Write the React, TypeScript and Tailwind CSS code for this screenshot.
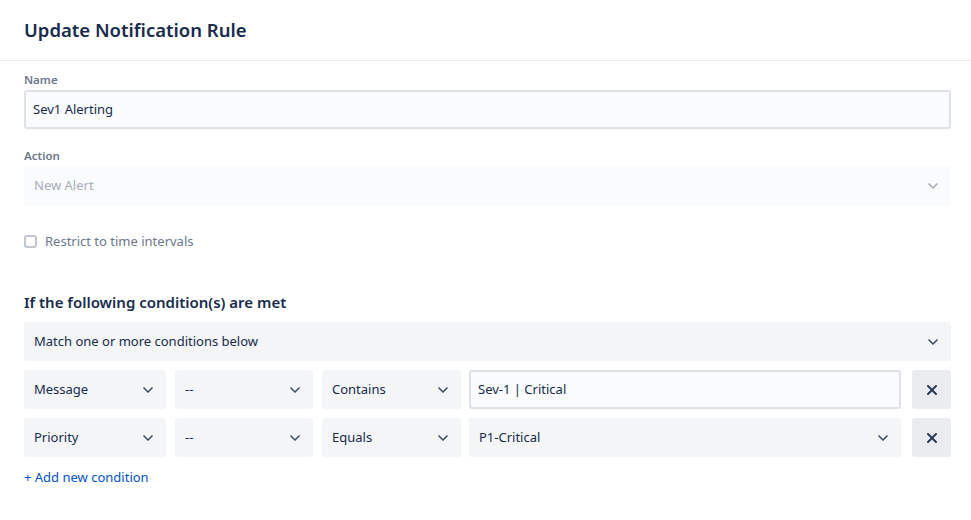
import { ChevronDown, X } from "lucide-react";

function Select({ value, className = "", muted = false }: { value: string; className?: string; muted?: boolean }) {
  return (
    <div
      className={`flex h-[39px] items-center justify-between rounded-[3px] pl-[10px] pr-[10px] ${
        muted ? "bg-[#fafbfc] text-[#a5adba]" : "bg-[#f4f5f7] text-[#172b4d]"
      } ${className}`}
    >
      <span className="text-[13px]">{value}</span>
      <ChevronDown className={`h-4 w-4 ${muted ? "text-[#a5adba]" : "text-[#42526e]"}`} strokeWidth={2.5} />
    </div>
  );
}

function ConditionRow({ field, op, match, value, isInput }: { field: string; op: string; match: string; value: string; isInput?: boolean }) {
  return (
    <div className="flex items-center">
      <Select value={field} className="w-[142px]" />
      <Select value={op} className="ml-[9px] w-[138px]" />
      <Select value={match} className="ml-[9px] w-[139px]" />
      {isInput ? (
        <div className="ml-[8px] flex h-[39px] w-[432px] items-center rounded-[3px] border-2 border-[#dfe1e6] bg-[#fafbfc] px-[7px] text-[13px] text-[#172b4d]">
          {value}
        </div>
      ) : (
        <Select value={value} className="ml-[8px] w-[432px]" />
      )}
      <button className="ml-[11px] flex h-[39px] w-[39px] items-center justify-center rounded-[3px] bg-[#ebecf0] text-[#253858]">
        <X className="h-4 w-4" strokeWidth={3} />
      </button>
    </div>
  );
}

export default function App() {
  return (
    <div className="min-h-[520px] w-[971px] bg-white font-['Noto_Sans',sans-serif] text-[#172b4d]">
      {/* Header */}
      <div className="flex h-[61px] items-center border-b border-[#ebecf0] px-[24px]">
        <h1 className="text-[18.5px] font-semibold leading-none">Update Notification Rule</h1>
      </div>

      <div className="px-[24px] pr-[20px]">
        {/* Name */}
        <label className="mt-[10px] block text-[11.5px] font-semibold text-[#6b778c]">Name</label>
        <div className="mt-[2px] flex h-[39px] items-center rounded-[3px] border-2 border-[#dfe1e6] bg-[#fafbfc] px-[7px] text-[13px]">
          Sev1 Alerting
        </div>

        {/* Action */}
        <label className="mt-[18px] block text-[11.5px] font-semibold text-[#6b778c]">Action</label>
        <Select value="New Alert" muted className="mt-[1px] h-[40px]" />

        {/* Restrict */}
        <div className="mt-[26px] flex items-center gap-[8px]">
          <span className="h-[13px] w-[13px] rounded-[3px] border-2 border-[#c1c7d0] bg-white" />
          <span className="text-[13px] text-[#6b778c]">Restrict to time intervals</span>
        </div>

        {/* Conditions */}
        <h2 className="mt-[44px] text-[15px] font-semibold leading-none">If the following condition(s) are met</h2>
        <Select value="Match one or more conditions below" className="mt-[12px]" />

        <div className="mt-[9px] flex flex-col gap-[9px]">
          <ConditionRow field="Message" op="--" match="Contains" value="Sev-1 | Critical" isInput />
          <ConditionRow field="Priority" op="--" match="Equals" value="P1-Critical" />
        </div>

        <button className="mt-[11px] text-[13px] text-[#0052cc]">+ Add new condition</button>
      </div>
    </div>
  );
}
